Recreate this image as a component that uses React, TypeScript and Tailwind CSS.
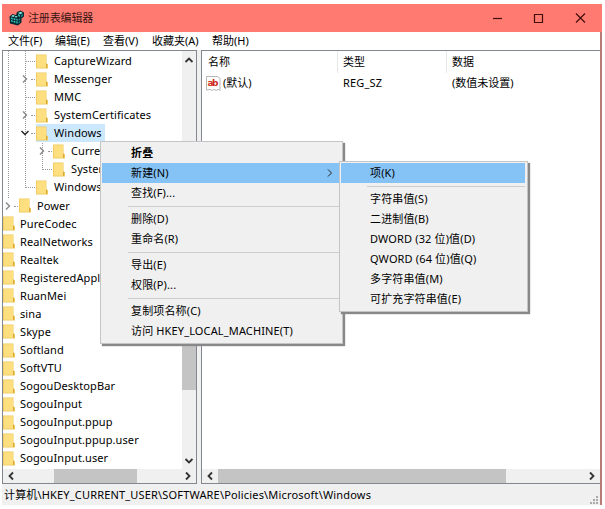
import React from 'react';
import { clsx } from 'clsx';

interface TreeNode {
  name: string;
  level: 0 | 1 | 2 | 3;
  state?: 'open' | 'closed';
  selected?: boolean;
}

interface MenuEntry {
  label: string;
  bold?: boolean;
  active?: boolean;
  submenu?: boolean;
}

const treeNodes: TreeNode[] = [
  { name: 'CaptureWizard', level: 2 },
  { name: 'Messenger', level: 2, state: 'closed' },
  { name: 'MMC', level: 2 },
  { name: 'SystemCertificates', level: 2, state: 'closed' },
  { name: 'Windows', level: 2, state: 'open', selected: true },
  { name: 'Curren', level: 3, state: 'closed' },
  { name: 'System', level: 3 },
  { name: 'Windows ', level: 2 },
  { name: 'Power', level: 1, state: 'closed' },
  { name: 'PureCodec', level: 0 },
  { name: 'RealNetworks', level: 0 },
  { name: 'Realtek', level: 0 },
  { name: 'RegisteredAppli', level: 0 },
  { name: 'RuanMei', level: 0 },
  { name: 'sina', level: 0 },
  { name: 'Skype', level: 0 },
  { name: 'Softland', level: 0 },
  { name: 'SoftVTU', level: 0 },
  { name: 'SogouDesktopBar', level: 0 },
  { name: 'SogouInput', level: 0 },
  { name: 'SogouInput.ppup', level: 0 },
  { name: 'SogouInput.ppup.user', level: 0 },
  { name: 'SogouInput.user', level: 0 },
];

const contextMenu: MenuEntry[][] = [
  [
    { label: '折叠', bold: true },
    { label: '新建(N)', active: true, submenu: true },
    { label: '查找(F)...' },
  ],
  [{ label: '删除(D)' }, { label: '重命名(R)' }],
  [{ label: '导出(E)' }, { label: '权限(P)...' }],
  [{ label: '复制项名称(C)' }, { label: '访问 HKEY_LOCAL_MACHINE(T)' }],
];

const newMenu: MenuEntry[][] = [
  [{ label: '项(K)', active: true }],
  [
    { label: '字符串值(S)' },
    { label: '二进制值(B)' },
    { label: 'DWORD (32 位)值(D)' },
    { label: 'QWORD (64 位)值(Q)' },
    { label: '多字符串值(M)' },
    { label: '可扩充字符串值(E)' },
  ],
];

const levelPadding = ['pl-0', 'pl-[16px]', 'pl-[33px]', 'pl-[50px]'];
const chevronLeft = ['left-0', 'left-0', 'left-[17px]', 'left-[34px]'];

const chevrons = {
  right: 'M3 1.5 6.5 5 3 8.5',
  left: 'M7 1.5 3.5 5 7 8.5',
  up: 'M1.5 7 5 3.5 8.5 7',
  down: 'M1.5 3 5 6.5 8.5 3',
};

function Chevron({ dir, className }: { dir: keyof typeof chevrons; className?: string }) {
  return (
    <svg viewBox="0 0 10 10" className={clsx('size-[10px] shrink-0', className)} fill="none" stroke="currentColor">
      <path d={chevrons[dir]} />
    </svg>
  );
}

function FolderIcon() {
  return (
    <svg viewBox="0 0 12 15" className="h-[15px] w-3 shrink-0">
      <path d="M0 .5h10.5v9.5H12v4.5H0z" fill="#eec95c" />
      <path d="M.8 1.2H10v12.5H.8z" fill="#fddf80" />
      <path d="M10.5 9.5v4.5" stroke="#dba93a" />
    </svg>
  );
}

function RegeditIcon() {
  return (
    <svg viewBox="0 0 16 16" className="size-4 shrink-0">
      <path d="M.5 6.5 3.5 4 7 5 8 2l3.5-1.5L15 2.5v4l-2.5 2v4L9 15.5l-8-2z" fill="#08292d" />
      <path d="M2 7.5l1.8.4v1.6L2 9.1zM4.6 8.1l1.8.4v1.7l-1.8-.4zM2 10l1.8.4V12L2 11.6zM4.6 10.7l1.8.4v1.7l-1.8-.4zM7.2 11.3l1.5.3v2l-1.5-.4zM7.2 8.7l1.5.3v1.7l-1.5-.4z" fill="#2cc0c2" />
      <path d="m2.2 6.3 1.6-1.2 2 .5-1.4 1.3zM5.4 7.1l1.3-1.2 2 .5L7.5 7.6z" fill="#90eeea" />
      <path d="m9.6 9.2 1.5-1.1v1.6l-1.5 1.2zM9.6 12l1.5-1.2v1.5l-1.5 1.3z" fill="#14858c" />
      <path d="M9 3 11.5 1.7 13.8 3l-2.4 1.2z" fill="#8beae8" />
      <path d="m9 3.9 2 1v2L9 6z" fill="#2cb4b8" />
      <path d="m12 5 2-1v2l-2 1.2z" fill="#14858c" />
    </svg>
  );
}

function StringValueIcon() {
  return (
    <svg viewBox="0 0 15 15" className="size-[15px] shrink-0">
      <path d="M.5.5h11l2.5 2v12l-2-1.2-2 1.2-2-1.2-2 1.2-2-1.2-3.5.8z" fill="#fff" stroke="#b5b5b5" />
      <text x="1.5" y="10" fill="#d02b20" fontSize="9" fontWeight="700" fontFamily="DejaVu Sans" textLength="11">ab</text>
    </svg>
  );
}

function TitleBar() {
  return (
    <div className="flex h-7 shrink-0 items-center bg-[#ff7a70] pl-[7px] text-[#40100f]">
      <RegeditIcon />
      <span className="ml-[3px] text-[11px] tracking-[-0.15px] text-[#3a1413]">注册表编辑器</span>
      <svg viewBox="0 0 95 12" className="mr-[15px] ml-auto h-3 w-[95px]" fill="none" stroke="currentColor" strokeWidth="1.2">
        <path d="M1 6.5h9" />
        <path d="M42.5 2.5h8v8h-8z" />
        <path d="m84 1.5 9 9m0-9-9 9" />
      </svg>
    </div>
  );
}

function MenuBar() {
  return (
    <div className="flex h-[18px] shrink-0 items-center bg-white pl-[6px]">
      <span className="w-[47px]">文件(F)</span>
      <span className="w-12">编辑(E)</span>
      <span className="w-[49px]">查看(V)</span>
      <span className="w-[60px]">收藏夹(A)</span>
      <span>帮助(H)</span>
    </div>
  );
}

function TreeRow({ node }: { node: TreeNode }) {
  return (
    <div className={clsx('relative flex h-[18.07px] shrink-0 items-center', levelPadding[node.level])}>
      {node.state && (
        <Chevron
          dir={node.state === 'open' ? 'down' : 'right'}
          className={clsx(
            'absolute stroke-[1.4]',
            chevronLeft[node.level],
            node.state === 'open' ? 'text-[#222]' : 'text-[#888]',
          )}
        />
      )}
      {node.level > 0 && (
        <span
          className={clsx(
            'absolute top-[9px] border-t border-dotted border-[#999]',
            node.level === 1 && 'left-[11px] w-1',
            node.level === 2 && (node.state ? 'left-[28px] w-1' : 'left-[22px] w-[10px]'),
            node.level === 3 && (node.state ? 'left-[45px] w-1' : 'left-[39px] w-[10px]'),
          )}
        />
      )}
      <span className={clsx('flex h-[18px] items-center', node.selected && 'bg-[#cce8ff]')}>
        <FolderIcon />
        <span className={clsx('pr-[3px] tracking-[0.1px]', node.level === 0 ? 'pl-[5px]' : 'pl-[6px]')}>{node.name}</span>
      </span>
    </div>
  );
}

function HScroll({ thumb }: { thumb: string }) {
  return (
    <div className="flex h-[14px] shrink-0 items-center bg-[#f0f0f0] text-[#333]">
      <Chevron dir="left" className="mx-[3px] stroke-[1.8]" />
      <div className="h-full flex-1">
        <div className={clsx('h-full bg-[#c4c4c4]', thumb)} />
      </div>
      <Chevron dir="right" className="mx-[3px] stroke-[1.8]" />
    </div>
  );
}

function KeyTree() {
  return (
    <div className="flex w-[195px] shrink-0 flex-col border border-[#828790] bg-white">
      <div className="flex h-[418px]">
        <div className="relative flex-1 overflow-hidden pt-[1px]">
          <span className="absolute top-0 left-[5px] h-[147px] border-l border-dotted border-[#999]" />
          <span className="absolute top-0 left-[22px] h-[137px] border-l border-dotted border-[#999]" />
          <span className="absolute top-[92px] left-[39px] h-[27px] border-l border-dotted border-[#999]" />
          {treeNodes.map((node) => (
            <TreeRow key={node.name} node={node} />
          ))}
        </div>
        <div className="flex w-[14px] flex-col items-center bg-[#f0f0f0] text-[#333]">
          <Chevron dir="up" className="mt-1 stroke-[1.8]" />
          <div className="mt-[225px] h-[100px] w-full bg-[#c4c4c4]" />
          <Chevron dir="down" className="mt-auto mb-[3px] stroke-[1.8]" />
        </div>
      </div>
      <HScroll thumb="ml-[35px] w-[83px]" />
    </div>
  );
}

function ValueList() {
  return (
    <div className="flex flex-1 flex-col border border-r-0 border-[#828790] bg-white">
      <div className="flex h-[22px] items-center">
        <div className="h-full w-[136px] border-r border-[#e8e8e8] pt-[3px] pl-[6px]">名称</div>
        <div className="h-full w-[109px] border-r border-[#e8e8e8] pt-[3px] pl-[5px]">类型</div>
        <div className="h-full pt-[3px] pl-[5px]">数据</div>
      </div>
      <div className="flex h-[20px] items-center">
        <div className="flex w-[136px] items-center pl-[4px]">
          <StringValueIcon />
          <span className="ml-[2px]">(默认)</span>
        </div>
        <div className="w-[109px] pl-[5px] tracking-[0.15px]">REG_SZ</div>
        <div className="pl-[5px]">(数值未设置)</div>
      </div>
      <div className="flex-1" />
      <HScroll thumb="w-[288px]" />
    </div>
  );
}

function PopupMenu({ groups, className }: { groups: MenuEntry[][]; className: string }) {
  return (
    <div
      className={clsx(
        'absolute border border-[#c4c4c4] bg-[#f0f0f0] p-px tracking-[0.14px] shadow-[2px_2px_1px_#888]',
        className,
      )}
    >
      {groups.map((group, i) => (
        <React.Fragment key={i}>
          {i > 0 && (
            <div className="flex h-[6px] items-center pl-[26px]">
              <div className="h-px flex-1 bg-[#cdcdcd]" />
            </div>
          )}
          {group.map((item) => (
            <div
              key={item.label}
              className={clsx(
                'flex h-5 items-center justify-between pl-[29px]',
                item.active && 'bg-[#85c2f5]',
                item.bold && 'font-bold',
              )}
            >
              <span>{item.label}</span>
              {item.submenu && <Chevron dir="right" className="mr-[4px] text-[#222]" />}
            </div>
          ))}
        </React.Fragment>
      ))}
    </div>
  );
}

export default function App() {
  return (
    <div className="relative h-[509px] w-[605px] overflow-hidden bg-white pt-1 pl-[2px] font-['Noto_Sans','Noto_Sans_CJK_SC',sans-serif] text-[11px] leading-[16px] whitespace-nowrap text-black">
      <div className="flex h-[501px] w-[600px] flex-col bg-[#f0f0f0]">
        <TitleBar />
        <div className="flex flex-1 flex-col border-r-2 border-[#b97a78]">
          <MenuBar />
          <div className="flex h-[434px] gap-1">
            <KeyTree />
            <ValueList />
          </div>
          <div className="flex flex-1 items-center justify-between pl-[2px]">
            <span className="tracking-[0.17px]">计算机\HKEY_CURRENT_USER\SOFTWARE\Policies\Microsoft\Windows</span>
            <svg viewBox="0 0 9 9" className="mr-px size-[9px] self-end" fill="#aaa">
              <path d="M6 0h2v2H6zM3 3h2v2H3zM6 3h2v2H6zM0 6h2v2H0zM3 6h2v2H3zM6 6h2v2H6z" />
            </svg>
          </div>
        </div>
      </div>

      <PopupMenu groups={contextMenu} className="top-[141px] left-[100px] h-[203px] w-[243px] pr-[3px]" />
      <PopupMenu groups={newMenu} className="top-[161px] left-[339px] h-[151px] w-[189px] pr-[2px]" />
    </div>
  );
}
